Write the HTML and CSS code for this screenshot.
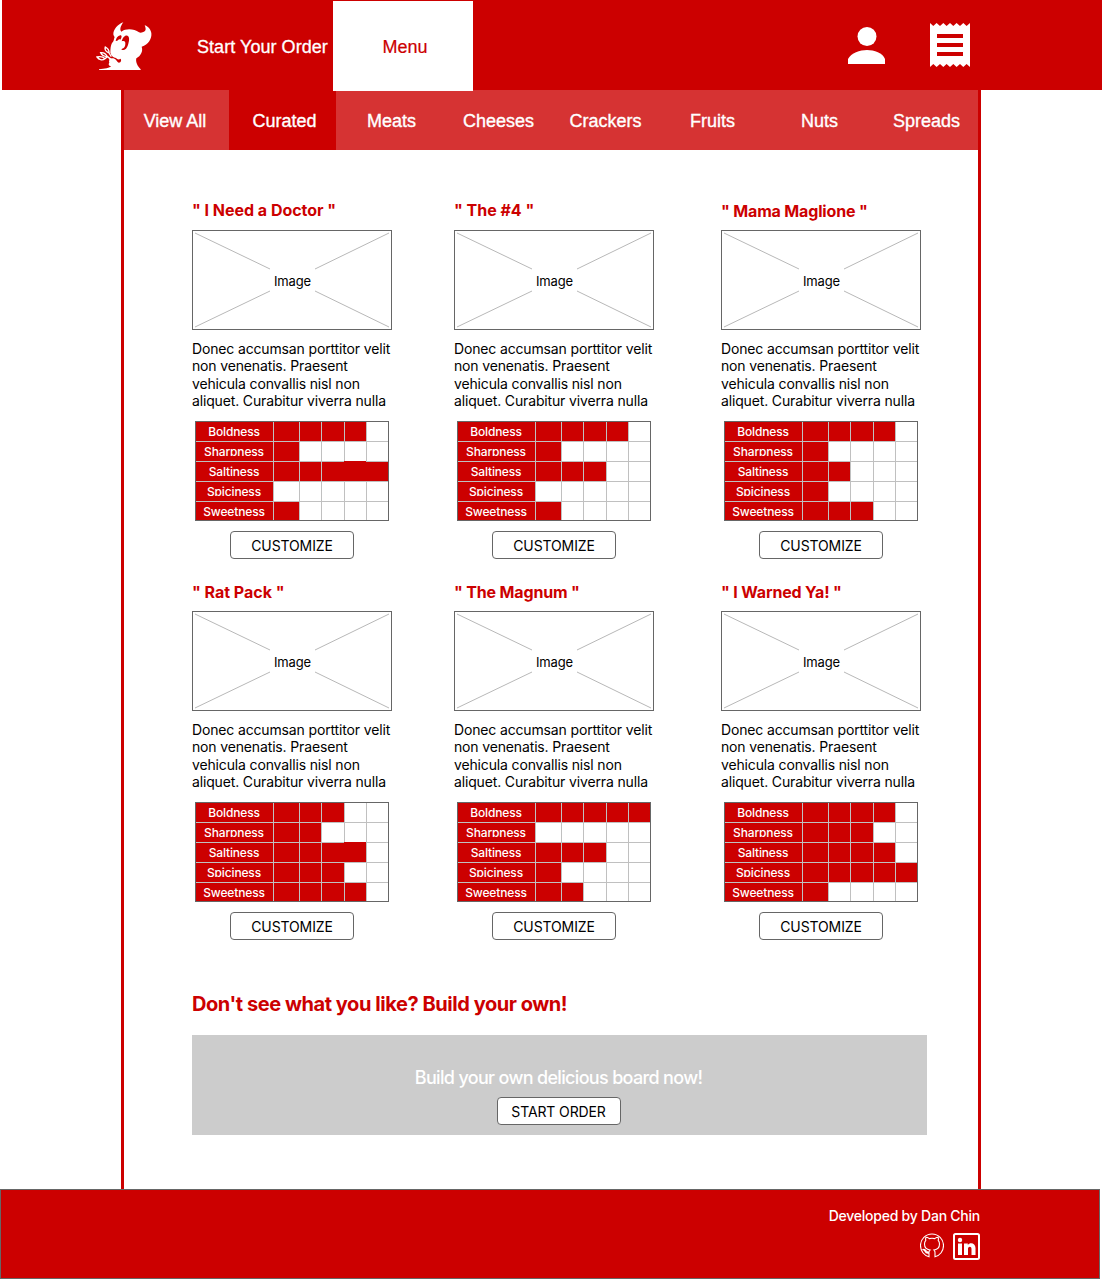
FILE: index.html
```html
<!DOCTYPE html>
<html lang="en">
<head>
<meta charset="utf-8">
<title>Menu - Curated Boards</title>
<link rel="stylesheet" href="styles.css">
</head>
<body>
<header class="topbar">
  <svg class="logo" viewBox="0 0 168 150" aria-label="Logo">
    <path fill="#fff" d="M82 1C66 6 52 22 52 37C53 41 54 43 56 45C53 52 55 56 48 63C44 70 43 81 43 92C46 102 52 107 60 108C63 112 68 114 74 110C77 114 75 121 69 122C63 122 62 112 52 109C43 106 37 116 40 122C35 127 41 133 46 133C41 138 26 140 9 142V144H134V142C125 133 118 120 121 109C134 101 142 88 137 74C157 68 168 50 166 33C163 19 153 12 146 10C150 19 151 28 142 30C136 32 133 33 129 31C115 21 91 18 76 29C70 23 74 12 82 1Z"/>
    <path fill="#c00" d="M87 42C97 37 102 47 98 61C95 76 90 83 83 84C78 84 74 82 78 80C84 79 88 74 88 66C89 57 84 55 77 58C79 51 81 45 87 42ZM59 57C60 49 65 42 73 40C79 40 77 48 73 53C70 50 67 52 64 56Z"/>
    <g fill="none" stroke="#fff" stroke-width="4"><path d="M28 75C25 84 32 90 39 93C40 85 35 79 28 75ZM14 92C18 101 26 103 34 104C29 94 22 91 14 92ZM3 105C9 113 18 117 27 110C20 103 11 103 3 105ZM27 110L34 104L45 111M39 93L46 104M36 104L48 120"/></g>
  </svg>
  <nav class="main-nav"><a class="order">Start Your Order</a><a class="menu">Menu</a></nav>
  <svg class="user" viewBox="0 0 38 38" fill="#fff"><circle cx="19" cy="9.5" r="9.5"/><path d="M0 37V32C3 26 12 23 19 23S35 26 37 32V37Z"/></svg>
  <svg class="receipt" viewBox="0 0 40 44"><path fill="#fff" d="M0 0L3.3 3L6.6 0L10 3L13.3 0L16.6 3L20 0L23.3 3L26.6 0L30 3L33.3 0L36.6 3L40 0V44L36.6 41L33.3 44L30 41L26.6 44L23.3 41L20 44L16.6 41L13.3 44L10 41L6.6 44L3.3 41L0 44Z"/><path fill="#c00" d="M7 11h26v4H7zM7 20h26v4H7zM7 29h26v4H7z"/></svg>
</header>
<main class="page">
  <nav class="tabs"><a>View All</a><a class="active">Curated</a><a>Meats</a><a>Cheeses</a><a>Crackers</a><a>Fruits</a><a>Nuts</a><a>Spreads</a></nav>
  <section class="boards" id="boards"></section>
  <section class="build">
    <h2>Don't see what you like? Build your own!</h2>
    <div class="banner"><p>Build your own delicious board now!</p><button class="btn">START ORDER</button></div>
  </section>
</main>
<footer class="footer">
  <p>Developed by Dan Chin</p>
  <div class="social">
    <svg class="github" viewBox="0 0 24 24" fill="none" stroke="#fff" stroke-width="1.1"><path d="M9 23.2V19.5C6.5 20 5.5 19 5 17.8C4.4 16.7 3.8 16.3 3.2 16C4.8 15.5 5.7 16.7 6.5 17.7C7.2 18.5 8.2 18.6 9.1 18.2C9.2 17.4 9.5 16.9 10 16.5C6.5 16 4.5 14.5 4.5 10.5C4.5 9 5 7.8 5.8 6.9C5.5 5.8 5.5 4.8 6 3.8C7.5 3.8 8.5 4.5 9.3 5.1C11 4.7 13 4.7 14.7 5.1C15.6 4.5 16.8 3.8 18.1 3.8C18.5 4.8 18.5 5.8 18.2 6.9C19 7.8 19.5 9 19.5 10.5C19.5 14.5 17.5 16 14 16.5C14.8 17.2 15 18 15 19V23.2C20 22 23.5 17.5 23.5 12A11.5 11.5 0 1 0 .5 12C.5 17.5 4 22 9 23.2Z"/></svg>
    <svg class="linkedin" viewBox="0 0 27 27"><rect x="1" y="1" width="25" height="25" rx="1.5" fill="none" stroke="#fff" stroke-width="2"/><g fill="#fff"><circle cx="7" cy="7" r="2.2"/><path d="M5 10.5h4V22H5zM11 10.5h3.8v1.6c2-3 7.7-2.2 7.7 3V22h-4v-6c0-3.3-3.5-2.8-3.5 0v6h-4z"/></g></svg>
  </div>
</footer>
<script src="boards.js"></script>
</body>
</html>
```
FILE: styles.css
```css
* { box-sizing: border-box; }
body { margin: 0; width: 1102px; background: #fff; font-family: Inter, sans-serif; color: #000; }
h2, h3, p { margin: 0; }

.topbar { display: flex; align-items: flex-start; height: 90px; margin-left: 2px; background: #c00; }
.logo { width: 56px; height: 50px; margin: 22px 0 0 94px; }
.main-nav { display: flex; margin: 1px 0 0 43px; font: 18px/92px "Liberation Sans", Arial, sans-serif; color: #fff; height: 90px; }
.order { width: 138px; padding-left: 2px; white-space: nowrap; letter-spacing: .05px; -webkit-text-stroke: .3px #fff; }
.menu { width: 140px; height: 90px; padding-left: 4px; background: #fff; color: #c00; text-align: center; position: relative; -webkit-text-stroke: .2px #c00; }
.user { width: 38px; height: 38px; margin: 27px 0 0 375px; }
.receipt { width: 40px; height: 44px; margin: 23px 0 0 44px; }

.page { width: 860px; height: 1099px; margin-left: 121px; border: solid #c00; border-width: 0 3px; }
.tabs { display: grid; grid-template-columns: 105px repeat(7, 107px); grid-template-rows: 60px; height: 60px; background: #d63333; color: #fff; font: 18px/62px "Liberation Sans", Arial, sans-serif; text-align: center; }
.tabs a { height: 60px; padding-left: 4px; -webkit-text-stroke: .35px #fff; }
.tabs a:first-child { padding: 0 3px 0 0; }
.tabs .active { background: #c00; }

.boards { display: grid; grid-template-columns: 262px 267px 200px; grid-auto-rows: 381px; padding: 50px 0 0 68px; }
.board { display: flex; flex-direction: column; width: 200px; }
.board h3 { height: 30px; font-size: 16px; line-height: 21px; color: #c00; white-space: nowrap; letter-spacing: -.02px; }
.board h3.low { padding-top: 1px; }
.board h3.tight { letter-spacing: -.16px; }
.photo { display: block; width: 200px; height: 100px; }
.photo text { font-size: 13px; letter-spacing: -.15px; }
.board p { margin-top: 10px; height: 81px; font-size: 14px; line-height: 17.4px; white-space: nowrap; letter-spacing: -.15px; }
.chart { display: grid; grid-template-columns: 77px 25px 21px 22px 21px 21px; grid-template-rows: repeat(4, 19px) 18px; gap: 1px; width: 194px; height: 100px; margin-left: 3px; border: 1px solid #666; background: #c0c0c0; }
.label { background: #c00; color: #fff; font-size: 12px; line-height: 19px; font-weight: 500; letter-spacing: -.15px; text-align: center; padding-right: 1px; }
.label .clip { height: 14px; overflow: hidden; }
.cell { background: #fff; }
.on { background: #c00; }
.join { margin-left: -1px; }
.raise { margin-top: -1px; }
.btn { display: block; width: 124px; height: 28px; padding: 1px 0 0; border: 1px solid #666; border-radius: 4px; background: #fff; font: 14px/26px Inter, sans-serif; letter-spacing: -.12px; color: #000; text-align: center; }
.board .btn { margin: 10px 0 0 38px; }

.build { padding: 28px 0 0 68px; }
.build h2 { height: 45px; font-size: 20px; line-height: 28px; letter-spacing: -.44px; color: #c00; white-space: nowrap; }
.banner { display: flex; flex-direction: column; align-items: center; width: 735px; height: 100px; padding: 30px 2px 0 0; background: #ccc; }
.banner p { height: 32px; font-size: 18px; line-height: 26px; font-weight: 500; letter-spacing: -.67px; color: #fff; white-space: nowrap; }

.footer { display: flex; flex-direction: column; align-items: flex-end; width: 1100px; height: 90px; padding: 16px 119px 0 0; border: 1px solid #666; background: #c00; color: #fff; }
.footer p { height: 27px; font-size: 14px; line-height: 19px; font-weight: 500; letter-spacing: -.24px; white-space: nowrap; }
.social { display: flex; gap: 9px; }
.github { width: 24px; height: 25px; }
.linkedin { width: 27px; height: 27px; }
```
FILE: boards.js
```js
const traits = ["Boldness", "Sharpness", "Saltiness", "Spiciness", "Sweetness"];
const boards = [
  { name: "I Need a Doctor", scores: [4, 1, 5, 0, 1], joined: true },
  { name: "The #4", scores: [4, 1, 3, 0, 1] },
  { name: "Mama Maglione", scores: [4, 1, 2, 1, 3], title: "low tight" },
  { name: "Rat Pack", scores: [3, 2, 4, 3, 4], joined: true, title: "low" },
  { name: "The Magnum", scores: [5, 0, 3, 1, 2], title: "low tight" },
  { name: "I Warned Ya!", scores: [4, 3, 4, 5, 1], title: "low tight" }
];

function cell(board, row, col) {
  let cls = "cell";
  if (col <= board.scores[row]) cls += " on";
  if (board.joined && row === 2 && col <= board.scores[row]) {
    if (col > 3) cls += " join";
    if (col === 4) cls += " raise";
  }
  return `<i class="${cls}"></i>`;
}

function label(trait) {
  return `<div class="label"><div${trait.includes("p") ? ' class="clip"' : ""}>${trait}</div></div>`;
}

document.getElementById("boards").innerHTML = boards.map(b => `
  <article class="board">
    <h3 class="${b.title || ""}">" ${b.name} "</h3>
    <svg class="photo" viewBox="0 0 200 100">
      <rect x=".5" y=".5" width="199" height="99" fill="#fff" stroke="#666"/>
      <path d="M3 3L78 39M197 3L123 39M3 97L78 61M197 97L123 61" stroke="#b8b8b8" fill="none"/>
      <text x="100.5" y="56" text-anchor="middle">Image</text>
    </svg>
    <p>Donec accumsan porttitor velit<br>non venenatis. Praesent<br>vehicula convallis nisl non<br>aliquet. Curabitur viverra nulla</p>
    <div class="chart">${traits.map((t, r) => label(t) + [1, 2, 3, 4, 5].map(c => cell(b, r, c)).join("")).join("")}</div>
    <button class="btn">CUSTOMIZE</button>
  </article>`).join("");
```
